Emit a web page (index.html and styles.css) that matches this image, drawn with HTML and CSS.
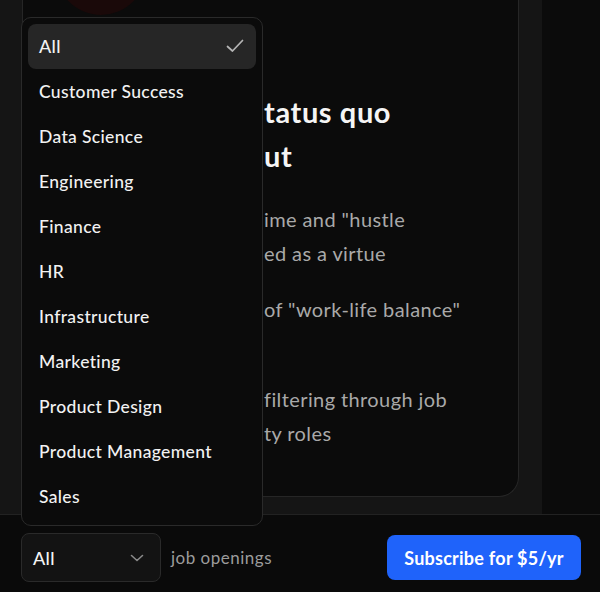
FILE: index.html
```html
<!DOCTYPE html>
<html lang="en">
<head>
<meta charset="utf-8">
<title>Jobs</title>
<link rel="stylesheet" href="styles.css">
</head>
<body>
<div class="page">
  <div class="main">
    <div class="panel">
      <div class="card">
        <div class="blob"></div>
        <div class="content">
          <h2 class="title">tatus quo<br>ut</h2>
          <p class="para">ime and "hustle<br>ed as a virtue</p>
          <p class="para">of "work-life balance"<br>&nbsp;</p>
          <p class="para">filtering through job<br>ty roles</p>
        </div>
      </div>
    </div>
    <div class="side"></div>
  </div>
  <div class="bar">
    <div class="filter">
      <button class="select" type="button">
        <span>All</span>
        <svg class="chev" width="14" height="8" viewBox="0 0 14 8" fill="none"><path d="M1.5 1.5 L7 6.5 L12.5 1.5" stroke="#8a8a8a" stroke-width="1.6" stroke-linecap="round" stroke-linejoin="round"/></svg>
      </button>
      <span class="label">job openings</span>
    </div>
    <button class="subscribe" type="button">Subscribe for $5/yr</button>
  </div>

  <ul class="menu">
    <li class="item active"><span>All</span>
      <svg class="check" width="18" height="14" viewBox="0 0 18 14" fill="none"><path d="M1.5 7.5 L6.5 12 L16.5 1.5" stroke="#b5b5b5" stroke-width="1.7" stroke-linecap="round" stroke-linejoin="round"/></svg>
    </li>
    <li class="item"><span>Customer Success</span></li>
    <li class="item"><span>Data Science</span></li>
    <li class="item"><span>Engineering</span></li>
    <li class="item"><span>Finance</span></li>
    <li class="item"><span>HR</span></li>
    <li class="item"><span>Infrastructure</span></li>
    <li class="item"><span>Marketing</span></li>
    <li class="item"><span>Product Design</span></li>
    <li class="item"><span>Product Management</span></li>
    <li class="item"><span>Sales</span></li>
  </ul>
</div>
</body>
</html>
```
FILE: styles.css
```css
* { box-sizing: border-box; }
html, body { margin: 0; padding: 0; }
body {
  width: 600px;
  height: 592px;
  overflow: hidden;
  background: #0b0b0b;
  font-family: "Lato", "Open Sans", sans-serif;
  color: #f2f2f2;
}
.page {
  position: relative;
  width: 600px;
  height: 592px;
  display: flex;
  flex-direction: column;
}
.main {
  display: flex;
  height: 514px;
}
.panel {
  width: 542px;
  background: #151515;
  padding: 0 23px 17px 22px;
  display: flex;
}
.card {
  position: relative;
  flex: 1;
  background: #0b0b0b;
  border: 1px solid #262626;
  border-top: none;
  border-radius: 0 0 20px 20px;
  overflow: hidden;
}
.blob {
  position: absolute;
  left: 33px;
  top: -75px;
  width: 90px;
  height: 90px;
  border-radius: 50%;
  background: #1a0909;
}
.content {
  padding: 90px 0 0 241px;
  white-space: nowrap;
}
.title {
  margin: 0 0 24px;
  font-size: 29px;
  line-height: 44px;
  font-weight: 700;
  letter-spacing: 0.6px;
  color: #f5f5f5;
}
.para {
  margin: 0 0 22px;
  font-size: 20px;
  line-height: 34px;
  letter-spacing: 0.4px;
  color: #a9a9a9;
}
.side {
  flex: 1;
  background: #0b0b0b;
}
.bar {
  flex: 1;
  border-top: 1px solid #222222;
  background: #0a0a0a;
  display: flex;
  align-items: center;
  justify-content: space-between;
  padding: 8px 19px 0 21px;
}
.filter {
  display: flex;
  align-items: center;
  gap: 10px;
}
.select {
  width: 140px;
  height: 49px;
  display: flex;
  align-items: center;
  justify-content: space-between;
  padding: 0 16px 0 11px;
  background: #131313;
  border: 1px solid #2a2a2a;
  border-radius: 8px;
  color: #f5f5f5;
  font-family: inherit;
  font-size: 18px;
  font-weight: 500;
  letter-spacing: 0.3px;
}
.label {
  font-size: 17px;
  letter-spacing: 0.5px;
  color: #9c9c9c;
}
.subscribe {
  width: 194px;
  height: 45px;
  border: none;
  border-radius: 8px;
  background: #1f63fa;
  color: #ffffff;
  font-family: inherit;
  font-size: 18px;
  font-weight: 700;
  letter-spacing: 0.25px;
}
.menu {
  position: absolute;
  left: 21px;
  top: 17px;
  width: 242px;
  margin: 0;
  padding: 6px;
  list-style: none;
  background: #0b0b0b;
  border: 1px solid #2a2a2a;
  border-radius: 10px;
}
.item {
  height: 45px;
  display: flex;
  align-items: center;
  justify-content: space-between;
  padding: 0 12px 0 11px;
  border-radius: 8px;
  font-size: 17.5px;
  font-weight: 500;
  letter-spacing: 0.35px;
  color: #f2f2f2;
}
.item.active {
  background: #262626;
  font-size: 18px;
  padding-bottom: 2px;
}
```
